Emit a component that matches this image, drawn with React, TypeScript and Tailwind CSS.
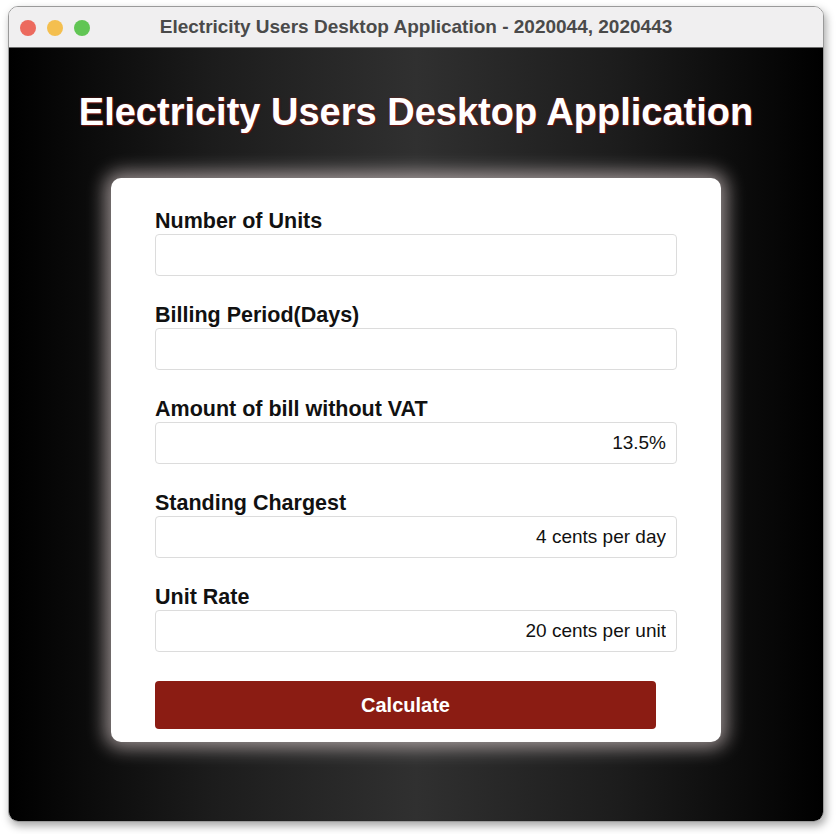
const fields = [
  { id: 1, label: "Number of Units", value: "" },
  { id: 2, label: "Billing Period(Days)", value: "" },
  { id: 3, label: "Amount of bill without VAT", value: "13.5%" },
  { id: 4, label: "Standing Chargest", value: "4 cents per day" },
  { id: 5, label: "Unit Rate", value: "20 cents per unit" },
];

const App = () => {
  return (
    <div className="w-[836px] h-[834px] bg-white pt-[6px] pl-[8px] font-['Liberation_Sans',Arial,sans-serif]">
      <div className="w-[816px] h-[816px] flex flex-col rounded-[10px] border border-[#9a9a9a] overflow-hidden shadow-[2px_4px_8px_rgba(0,0,0,0.35)]">
        {/* title bar */}
        <div className="relative h-[41px] shrink-0 bg-[#f0eff0] border-b border-[#6f6f6f] flex items-center pl-[11px]">
          <div className="flex gap-[11px] mt-[2px]">
            <div className="w-4 h-4 rounded-full bg-[#ec6a5e]"></div>
            <div className="w-4 h-4 rounded-full bg-[#f4bf4f]"></div>
            <div className="w-4 h-4 rounded-full bg-[#61c554]"></div>
          </div>
          <div className="absolute inset-0 flex items-center justify-center text-[19px] font-bold text-[#4a4a4a]">
            Electricity Users Desktop Application - 2020044, 2020443
          </div>
        </div>

        {/* content */}
        <div className="flex-1 flex flex-col items-center pt-[42px] bg-[linear-gradient(90deg,#000_0%,#1c1c1c_25%,#303030_50%,#1c1c1c_75%,#000_100%)]">
          <h1 className="text-[38px] leading-[44px] font-bold text-white [text-shadow:0_0_2px_#8b1c13,1px_1px_1px_#6b1410]">
            Electricity Users Desktop Application
          </h1>

          <div className="mt-[44px] w-[610px] h-[564px] bg-white rounded-[10px] pt-[31px] px-[44px] shadow-[0_0_18px_6px_rgba(255,238,238,0.55)]">
            {fields.map((el, i) => (
              <div key={el.id} className={i > 0 ? "mt-[27px]" : ""}>
                <div className="text-[21.5px] leading-[24px] font-bold text-[#111] mb-[1px]">{el.label}</div>
                <input
                  type="text"
                  readOnly
                  value={el.value}
                  className="w-[522px] h-[42px] border border-[#dcdcdc] rounded-[4px] px-[10px] text-right text-[19px] text-[#111] outline-none bg-white"
                />
              </div>
            ))}
            <button className="mt-[29px] w-[501px] h-[48px] bg-[#8b1c13] rounded-[4px] text-white text-[20px] font-bold">
              Calculate
            </button>
          </div>
        </div>
      </div>
    </div>
  );
};

export default App;
